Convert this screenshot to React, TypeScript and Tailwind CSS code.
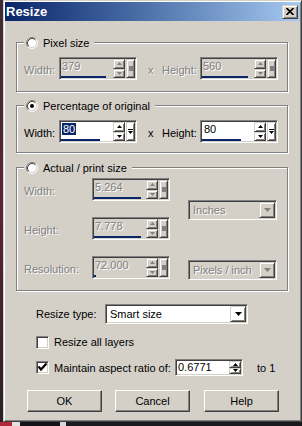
import type { ReactNode } from "react";

const sunken =
  "border border-[#808080] border-r-white border-b-white shadow-[inset_1px_1px_0_#404040,inset_-1px_-1px_0_#d4d0c8]";
const raised =
  "border border-[#d4d0c8] border-r-[#404040] border-b-[#404040] shadow-[inset_1px_1px_0_#fff,inset_-1px_-1px_0_#808080]";
const dim = "text-[#808080] [text-shadow:1px_1px_0_#fff]";

function Radio({ checked }: { checked?: boolean }) {
  return (
    <svg width="12" height="12" viewBox="0 0 12 12" className="shrink-0">
      <circle cx="6" cy="6" r="5" fill="#fff" />
      <path d="M2.11 9.89A5.5 5.5 0 0 1 9.89 2.11" stroke="#808080" fill="none" />
      <path d="M9.89 2.11A5.5 5.5 0 0 1 2.11 9.89" stroke="#fff" fill="none" />
      <path d="M2.82 9.18A4.5 4.5 0 0 1 9.18 2.82" stroke="#404040" fill="none" />
      <path d="M9.18 2.82A4.5 4.5 0 0 1 2.82 9.18" stroke="#d4d0c8" fill="none" />
      {checked && <circle cx="6" cy="6" r="2" fill="#000" />}
    </svg>
  );
}

function Checkbox({ checked }: { checked?: boolean }) {
  return (
    <div className={`w-[13px] h-[13px] bg-white ${sunken} shrink-0`}>
      {checked && (
        <svg width="11" height="11" viewBox="0 0 11 11">
          <path d="M1.5 4.5L4 7.5L9.5 1.5" stroke="#000" strokeWidth="2.2" fill="none" />
        </svg>
      )}
    </div>
  );
}

function Arrow({ up, disabled }: { up?: boolean; disabled?: boolean }) {
  return (
    <svg width="5" height="3" viewBox="0 0 5 3">
      <path d={up ? "M0 3H5L2.5 0Z" : "M0 0H5L2.5 3Z"} fill={disabled ? "#808080" : "#000"} />
    </svg>
  );
}

function Spin({ disabled, small }: { disabled?: boolean; small?: boolean }) {
  return (
    <div className="flex flex-col w-[12px]">
      <div className={`flex flex-1 items-center justify-center ${raised} ${small ? "" : "h-[10px]"}`}>
        <Arrow up disabled={disabled} />
      </div>
      <div className={`flex flex-1 items-center justify-center ${raised}`}>
        <Arrow disabled={disabled} />
      </div>
    </div>
  );
}

function SpinEdit({
  value,
  bar,
  disabled,
  selected,
}: {
  value: string;
  bar: number;
  disabled?: boolean;
  selected?: boolean;
}) {
  return (
    <div className={`flex h-[23px] w-[78px] p-px ${sunken} ${disabled ? "bg-[#d4d0c8]" : "bg-white"}`}>
      <div className="flex flex-1 flex-col justify-between">
        <div className="pl-[1px] leading-[14px]">
          <span className={disabled ? dim : selected ? "bg-[#0a246a] text-white px-px" : "px-px"}>{value}</span>
        </div>
        <div className="h-[2px] bg-[#0a246a]" style={{ width: bar }} />
      </div>
      <Spin disabled={disabled} />
      <div className={`ml-px w-[9px] flex items-center justify-center ${raised}`}>
        {disabled ? (
          <div className="w-[4px] h-[5px] bg-[#808080]" />
        ) : (
          <svg width="5" height="6" viewBox="0 0 5 6">
            <rect x="0" y="0" width="5" height="1" fill="#000" />
            <path d="M0 2H5L2.5 5Z" fill="#000" />
          </svg>
        )}
      </div>
    </div>
  );
}

function Dropdown({ value, disabled, w }: { value: string; disabled?: boolean; w: string }) {
  return (
    <div className={`flex h-[20px] ${w} p-px ${sunken} ${disabled ? "bg-[#d4d0c8]" : "bg-white"}`}>
      <div className={`flex-1 pl-[3px] leading-[16px] ${disabled ? dim : ""}`}>{value}</div>
      <div className={`w-[16px] flex items-center justify-center ${raised}`}>
        <svg width="7" height="4" viewBox="0 0 7 4">
          <path d="M0 0H7L3.5 4Z" fill={disabled ? "#808080" : "#000"} />
        </svg>
      </div>
    </div>
  );
}

function Group({ title, checked, h, children }: { title: string; checked?: boolean; h: string; children: ReactNode }) {
  return (
    <div className={`w-[272px] ${h} border border-[#808080] shadow-[inset_1px_1px_0_#fff,1px_1px_0_#fff] flex flex-col`}>
      <div className="-mt-[7px] ml-[7px] self-start flex items-center gap-[5px] px-[2px] bg-[#d4d0c8] h-[14px]">
        <Radio checked={checked} />
        <span className="pr-[3px]">{title}</span>
      </div>
      {children}
    </div>
  );
}

function SizeRow({ w, h, wb, hb, disabled }: { w: string; h: string; wb: number; hb: number; disabled?: boolean }) {
  return (
    <div className="flex items-center pl-[7px]">
      <span className={`w-[35px] pt-[3px] ${disabled ? dim : ""}`}>Width:</span>
      <SpinEdit value={w} bar={wb} disabled={disabled} selected={!disabled} />
      <span className={`ml-[11px] w-[14px] pt-[3px] ${disabled ? dim : ""}`}>x</span>
      <span className={`w-[38px] pt-[3px] ${disabled ? dim : ""}`}>Height:</span>
      <SpinEdit value={h} bar={hb} disabled={disabled} />
    </div>
  );
}

function Button({ label }: { label: string }) {
  return (
    <button className="w-[75px] h-[22px] flex items-center justify-center bg-[#d4d0c8] border border-white border-r-[#404040] border-b-[#404040] shadow-[inset_-1px_-1px_0_#808080]">
      {label}
    </button>
  );
}

function Dialog() {
  return (
    <div className="w-[299px] h-[422px] bg-[#d4d0c8] border border-[#d4d0c8] border-r-[#404040] border-b-[#404040] shadow-[inset_1px_1px_0_#fff,inset_-1px_-1px_0_#808080] p-px flex flex-col">
      {/* Title bar */}
      <div className="h-[19px] flex items-center justify-between bg-gradient-to-r from-[#0a246a] to-[#a6caf0] pl-[1px] pr-[2px]">
        <span className="text-white font-bold text-[13px] leading-[15px]">Resize</span>
        <div className={`w-[16px] h-[14px] flex items-center justify-center bg-[#d4d0c8] ${raised}`}>
          <svg width="8" height="7" viewBox="0 0 8 7">
            <path d="M0.5 0L7.5 7M7.5 0L0.5 7" stroke="#000" strokeWidth="1.6" />
          </svg>
        </div>
      </div>

      <div className="flex flex-col pl-[11px]">
        <div className="mt-[21px]">
          <Group title="Pixel size" h="h-[50px]">
            <div className="mt-[7px]">
              <SizeRow w="379" h="560" wb={45} hb={46} disabled />
            </div>
          </Group>
        </div>

        <div className="mt-[13px]">
          <Group title="Percentage of original" checked h="h-[48px]">
            <div className="mt-[7px]">
              <SizeRow w="80" h="80" wb={39} hb={39} />
            </div>
          </Group>
        </div>

        <div className="mt-[14px]">
          <Group title="Actual / print size" h="h-[124px]">
            <div className="mt-[3px] flex pl-[7px]">
              <div className="flex flex-col gap-[16px]">
                {[
                  ["Width:", "5.264", 47],
                  ["Height:", "7.778", 47],
                  ["Resolution:", "72.000", 2],
                ].map(([label, value, bar]) => (
                  <div key={label as string} className="flex items-center">
                    <span className={`w-[68px] pt-[3px] ${dim}`}>{label}</span>
                    <SpinEdit value={value as string} bar={bar as number} disabled />
                  </div>
                ))}
              </div>
              <div className="ml-[18px] flex flex-col">
                <div className="mt-[22px]">
                  <Dropdown value="Inches" disabled w="w-[89px]" />
                </div>
                <div className="mt-[40px]">
                  <Dropdown value="Pixels / inch" disabled w="w-[89px]" />
                </div>
              </div>
            </div>
          </Group>
        </div>
      </div>

      {/* Resize type */}
      <div className="mt-[13px] ml-[31px] flex items-center">
        <span className="w-[69px]">Resize type:</span>
        <Dropdown value="Smart size" w="w-[143px]" />
      </div>

      <div className="mt-[11px] ml-[31px] flex items-center gap-[5px]">
        <Checkbox />
        <span>Resize all layers</span>
      </div>

      <div className="mt-[10px] ml-[31px] flex items-center">
        <Checkbox checked />
        <span className="ml-[5px] w-[121px]">Maintain aspect ratio of:</span>
        <div className={`flex h-[17px] w-[68px] p-px bg-white ${sunken}`}>
          <div className="flex-1 pl-[1px] leading-[13px]">0.6771</div>
          <Spin small />
        </div>
        <span className="ml-[14px]">to 1</span>
      </div>

      <div className="mt-[14px] ml-[22px] flex gap-[13px]">
        <Button label="OK" />
        <Button label="Cancel" />
        <div className="ml-px">
          <Button label="Help" />
        </div>
      </div>
    </div>
  );
}

export default function App() {
  return (
    <div className="w-[302px] h-[426px] flex flex-col bg-[#1c1a1e] font-['Liberation_Sans',Arial,sans-serif] text-[11px] leading-[14px] text-black overflow-hidden">
      <div className="flex h-[422px]">
        <div className="w-[3px] bg-gradient-to-b from-[#3b2b33] via-[#5a2435] to-[#2a2026]" />
        <Dialog />
      </div>
      <div className="h-[4px] flex">
        <div className="w-[12px] bg-[#b3263a]" />
        <div className="w-[8px] bg-[#e8e0e0]" />
        <div className="w-[40px] bg-[#141418]" />
        <div className="w-[6px] bg-[#d8d8d8]" />
        <div className="flex-1 bg-[#1a1a1e]" />
      </div>
    </div>
  );
}
